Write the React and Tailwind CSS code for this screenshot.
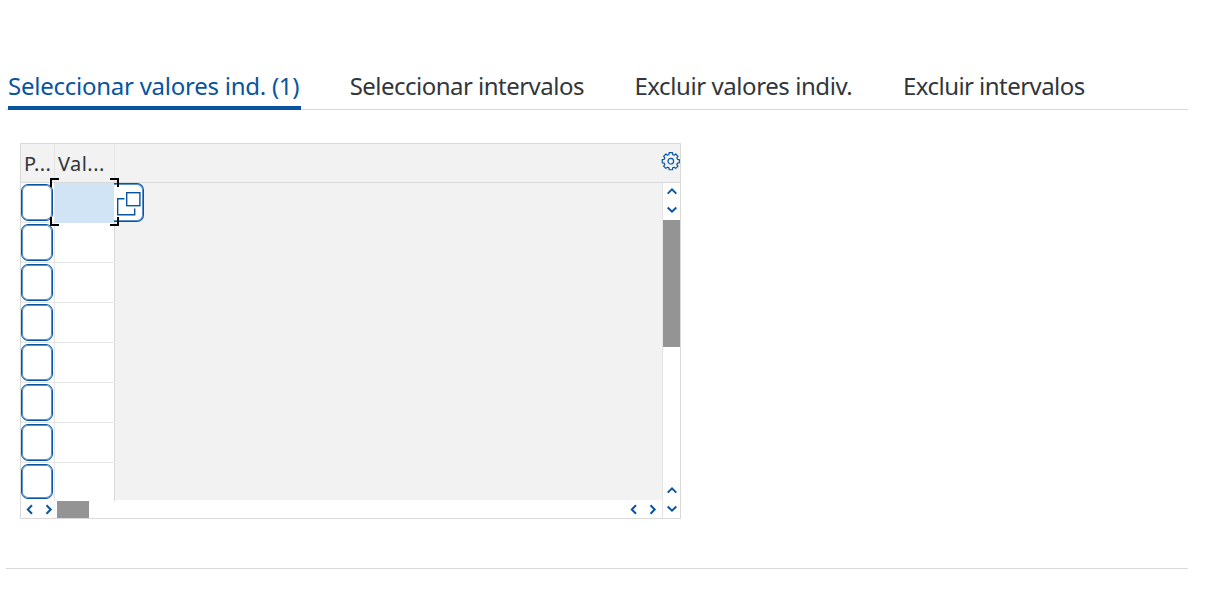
const tabs = [
  { label: "Seleccionar valores ind. (1)", box: "w-[293px]", text: "tracking-[-0.25px]", active: true },
  { label: "Seleccionar intervalos", box: "w-[236px]", text: "tracking-[-0.52px]" },
  { label: "Excluir valores indiv.", box: "w-[220px]", text: "tracking-[-0.42px]" },
  { label: "Excluir intervalos", box: "w-[184px]", text: "tracking-[-0.55px]" },
];

const rows = [0, 1, 2, 3, 4, 5, 6, 7];

const arrows = {
  left: "M8 1.2 L3.8 5.5 L8 9.8",
  right: "M3.5 1.2 L7.7 5.5 L3.5 9.8",
  up: "M0.7 7.6 L5 3.4 L9.3 7.6",
  down: "M0.7 3.5 L5 7.7 L9.3 3.5",
};

function Arrow({ dir, className = "" }) {
  return (
    <svg width="11" height="11" viewBox="0 0 11 11" fill="none" stroke="#0854a0" strokeWidth="2" className={`shrink-0 ${className}`}>
      <path d={arrows[dir]} />
    </svg>
  );
}

function Gear() {
  const points = [];
  const teeth = 8;
  for (let i = 0; i < teeth; i++) {
    const base = (i * 2 * Math.PI) / teeth;
    [[-0.27, 6.9], [-0.19, 8.7], [0.19, 8.7], [0.27, 6.9]].forEach(([da, r]) => {
      points.push(`${(9.8 + r * Math.sin(base + da)).toFixed(2)},${(9.2 - r * Math.cos(base + da)).toFixed(2)}`);
    });
  }
  return (
    <svg width="19" height="19" viewBox="0 0 19 19" fill="none" stroke="#0854a0" strokeWidth="1.2" strokeLinejoin="round" className="shrink-0">
      <polygon points={points.join(" ")} />
      <circle cx="9.8" cy="9.2" r="2.8" />
    </svg>
  );
}

function ValueHelp() {
  return (
    <div className="absolute left-[59px] top-0 flex h-[39px] w-[30px] rounded-r-[7px] border border-l-0 border-[#0854a0] bg-white shadow-[inset_-1px_0_0_#5a93cb,inset_0_1px_0_#5a93cb,inset_0_-1px_0_#5a93cb]">
      <svg width="29" height="37" viewBox="0 0 29 37" fill="none" stroke="#0854a0" strokeWidth="1.4">
        <rect x="12.7" y="8.7" width="13.2" height="13" />
        <path d="M10.5 14.7 H3.7 V30.7 H20.7 V24.5" />
      </svg>
    </div>
  );
}

function Brackets() {
  return (
    <svg width="69" height="48" viewBox="0 0 69 48" fill="none" stroke="#000" strokeWidth="2" className="absolute -left-[5px] -top-[5px]">
      <path d="M1 9 V1 H9 M60 1 H68 V9 M68 39 V47 H60 M9 47 H1 V39" />
    </svg>
  );
}

export default function App() {
  return (
    <div className="flex h-[600px] w-[1217px] flex-col overflow-hidden bg-white pl-[6px] pr-[29px] font-['Noto_Sans',sans-serif] text-[#32363a]">
      <div className="mt-[64px] flex h-[46px] gap-[48.7px] border-b border-[#d9d9d9] pl-[2px]">
        {tabs.map((t) => (
          <div key={t.label} className={`h-[46px] shrink-0 whitespace-nowrap text-[24px] leading-[44px] ${t.box} ${t.text} ${t.active ? "border-b-4 border-[#0854a0] text-[#0854a0]" : ""}`}>
            {t.label}
          </div>
        ))}
      </div>

      <div className="ml-[14px] mt-[33px] flex h-[376px] w-[661px] flex-col border border-[#d9d9d9]">
        <div className="flex h-[39px] border-b border-[#d9d9d9] bg-[#f2f2f2] text-[20px] leading-[40px] tracking-[0.45px]">
          <div className="w-[34px] border-r border-[#e5e5e5] pl-[3px]">P...</div>
          <div className="w-[60px] border-r border-[#e5e5e5] pl-[3px]">Val...</div>
          <div className="flex flex-1 justify-end pt-[8px]"><Gear /></div>
        </div>

        <div className="flex h-[335px]">
          <div className="flex w-[641px] flex-col">
            <div className="flex h-[317px] overflow-visible">
              <div className="w-[94px]">
                {rows.map((r) => (
                  <div key={r} className={`flex ${r === 7 ? "h-[38px]" : "h-[40px] border-b border-[#e5e5e5]"}`}>
                    <div className="w-[34px] border-r border-[#e5e5e5] pt-px">
                      <div className={`w-[32px] rounded-[7px] border border-[#0854a0] bg-white shadow-[inset_0_0_0_1px_#5a93cb] ${r === 7 ? "h-[35px]" : "h-[37px]"}`} />
                    </div>
                    <div className={`relative w-[60px] border-r ${r === 0 ? "z-10 h-[40px] border-transparent" : "border-[#d9d9d9]"}`}>
                      {r === 0 && (
                        <>
                          <div className="h-full w-full bg-[#d1e4f5]" />
                          <ValueHelp />
                          <Brackets />
                        </>
                      )}
                    </div>
                  </div>
                ))}
              </div>
              <div className="flex-1 bg-[#f2f2f2]" />
            </div>
            <div className="flex h-[18px] items-end">
              <div className="flex h-[17px] w-[36px] items-center justify-between pl-[3px]">
                <Arrow dir="left" />
                <Arrow dir="right" className="mr-[3px]" />
              </div>
              <div className="h-[17px] w-[32px] bg-[#949494]" />
              <div className="flex h-[17px] flex-1 items-center justify-end gap-[8px] pr-[4px]">
                <Arrow dir="left" />
                <Arrow dir="right" />
              </div>
            </div>
          </div>
          <div className="flex w-[18px] flex-col border-l border-[#e5e5e5]">
            <div className="flex h-[37px] flex-col items-center gap-[7px] pl-px pt-[3px]">
              <Arrow dir="up" />
              <Arrow dir="down" />
            </div>
            <div className="h-[127px] bg-[#949494]" />
            <div className="flex flex-1 flex-col items-center justify-end gap-[7px] pb-[4px] pl-px">
              <Arrow dir="up" />
              <Arrow dir="down" />
            </div>
          </div>
        </div>
      </div>

      <div className="mt-[49px] h-px bg-[#d9d9d9]" />
    </div>
  );
}
